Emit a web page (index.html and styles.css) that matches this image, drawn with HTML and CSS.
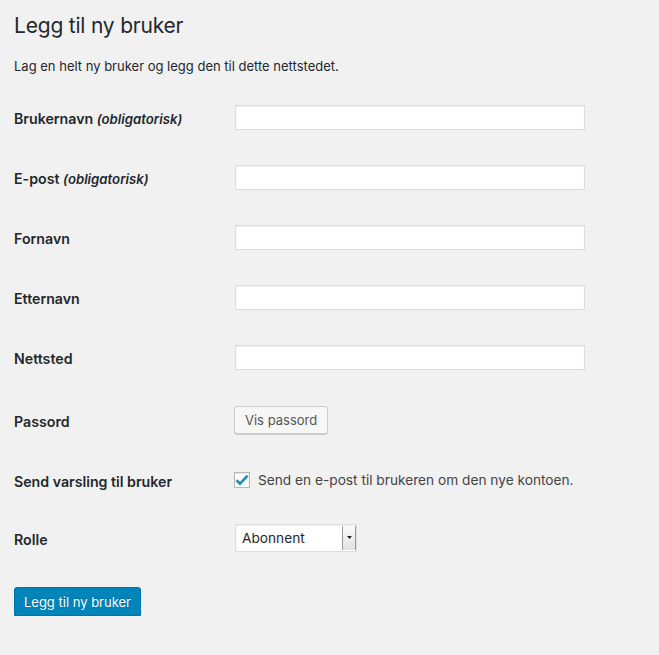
FILE: index.html
```html
<!DOCTYPE html>
<html lang="nb">
<head>
  <meta charset="UTF-8" />
  <title>Legg til ny bruker</title>
  <link rel="stylesheet" href="styles.css">
</head>
<body>
  <div class="wrap">
    <h1>Legg til ny bruker</h1>
    <p class="intro">Lag en helt ny bruker og legg den til dette nettstedet.</p>

    <form class="form-table">
      <div class="row">
        <label class="th">Brukernavn <span class="req">(obligatorisk)</span></label>
        <div class="td"><input type="text" class="text"></div>
      </div>
      <div class="row">
        <label class="th">E-post <span class="req">(obligatorisk)</span></label>
        <div class="td"><input type="text" class="text"></div>
      </div>
      <div class="row">
        <label class="th">Fornavn</label>
        <div class="td"><input type="text" class="text"></div>
      </div>
      <div class="row">
        <label class="th">Etternavn</label>
        <div class="td"><input type="text" class="text"></div>
      </div>
      <div class="row">
        <label class="th">Nettsted</label>
        <div class="td"><input type="text" class="text"></div>
      </div>
      <div class="row row-pass">
        <label class="th">Passord</label>
        <div class="td"><button type="button" class="button">Vis passord</button></div>
      </div>
      <div class="row row-notify">
        <label class="th">Send varsling til bruker</label>
        <div class="td">
          <label class="check">
            <span class="box">
              <svg width="14" height="12" viewBox="0 0 14 12"><path d="M1.5 6.2 L5 9.6 L12.6 1.6" fill="none" stroke="#1e8cbe" stroke-width="2.6" stroke-linejoin="miter"/></svg>
            </span>
            Send en e-post til brukeren om den nye kontoen.
          </label>
        </div>
      </div>
      <div class="row row-role">
        <label class="th">Rolle</label>
        <div class="td">
          <div class="select">
            <span class="value">Abonnent</span>
            <span class="arrow"><svg width="5" height="3" viewBox="0 0 5 3"><path d="M0 0 H5 L2.5 3 Z" fill="#222"/></svg></span>
          </div>
        </div>
      </div>
    </form>

    <button type="button" class="button-primary">Legg til ny bruker</button>
  </div>
</body>
</html>
```

FILE: styles.css
```css
body {
  margin: 0;
  background-color: #f1f1f1;
  color: #23282d;
  font-family: Inter, "Noto Sans", sans-serif;
  font-size: 13px;
}
.wrap {
  padding: 0 14px;
}
h1 {
  margin: 0;
  padding-top: 11px;
  font-size: 21px;
  font-weight: 400;
  line-height: 29px;
  letter-spacing: -0.2px;
}
.intro {
  margin: 0;
  padding-top: 18px;
  font-size: 13px;
  line-height: 17px;
}
.form-table {
  margin-top: 12px;
}
.row {
  display: flex;
  align-items: center;
  height: 60px;
}
.row-pass { height: 65px; }
.row-notify { height: 56px; }
.row-role { height: 59px; }
.th {
  width: 221px;
  padding-top: 3px;
  font-size: 14.2px;
  font-weight: 600;
}
.req {
  font-style: italic;
  font-size: 13.2px;
}
.td {
  display: flex;
  align-items: center;
}
input.text {
  box-sizing: border-box;
  width: 350px;
  height: 25px;
  margin: 0;
  border: 1px solid #ddd;
  box-shadow: inset 0 1px 2px rgba(0, 0, 0, 0.07);
  background: #fff;
}
.button {
  box-sizing: border-box;
  height: 28px;
  margin-left: -1px;
  padding: 0 10px;
  border: 1px solid #ccc;
  border-radius: 3px;
  background: #f7f7f7;
  box-shadow: 0 1px 0 #ccc;
  color: #555;
  font-family: inherit;
  font-size: 13px;
}
.check {
  display: flex;
  align-items: center;
  gap: 8px;
  font-size: 13.7px;
  color: #444;
}
.box {
  box-sizing: border-box;
  width: 16px;
  height: 16px;
  margin-left: -1px;
  border: 1px solid #b4b9be;
  background: #fff;
  box-shadow: inset 0 1px 2px rgba(0, 0, 0, 0.1);
  display: flex;
  align-items: center;
  justify-content: center;
}
.select {
  box-sizing: border-box;
  display: flex;
  align-items: stretch;
  width: 122px;
  height: 28px;
  border: 1px solid #ddd;
  background: #fff;
  box-shadow: inset 0 1px 2px rgba(0, 0, 0, 0.07);
}
.select .value {
  flex: 1;
  padding-left: 6px;
  display: flex;
  align-items: center;
  font-size: 13.7px;
  color: #23282d;
}
.select .arrow {
  width: 12px;
  margin: 1px 0;
  border-left: 1px solid #999;
  border-right: 1px solid #999;
  background: linear-gradient(#fafafa, #e2e2e2);
  display: flex;
  align-items: center;
  justify-content: center;
}
.button-primary {
  margin-top: 20px;
  box-sizing: border-box;
  width: 127px;
  height: 29px;
  padding: 0;
  border: 1px solid #0073aa;
  border-radius: 3px;
  background: #0085ba;
  box-shadow: 0 1px 0 #006799;
  color: #fff;
  font-family: inherit;
  font-size: 13px;
  text-shadow: 0 -1px 1px #006799;
}
```
